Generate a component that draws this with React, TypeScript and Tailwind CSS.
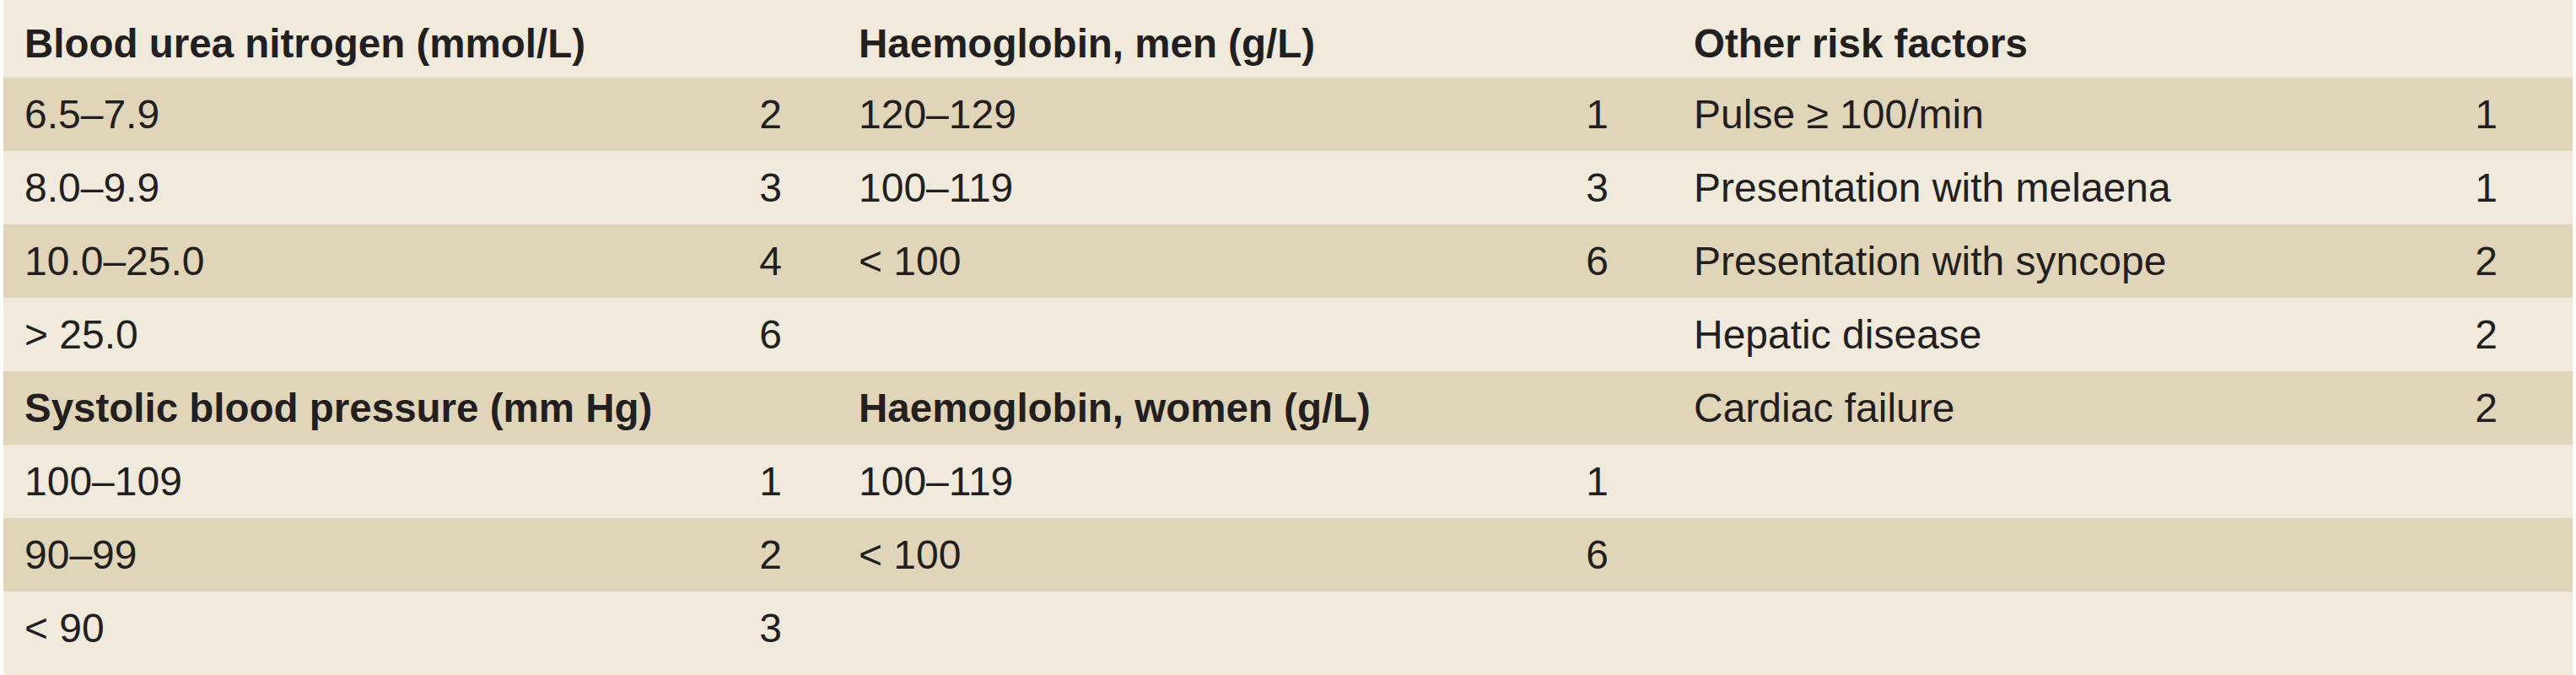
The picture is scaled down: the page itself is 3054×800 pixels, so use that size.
import React from "react";

type Cell = { label?: string; value?: string; bold?: boolean };
type Row = { dark: boolean; cells: [Cell, Cell, Cell] };

const rows: Row[] = [
  {
    dark: true,
    cells: [
      { label: "6.5–7.9", value: "2" },
      { label: "120–129", value: "1" },
      { label: "Pulse ≥ 100/min", value: "1" },
    ],
  },
  {
    dark: false,
    cells: [
      { label: "8.0–9.9", value: "3" },
      { label: "100–119", value: "3" },
      { label: "Presentation with melaena", value: "1" },
    ],
  },
  {
    dark: true,
    cells: [
      { label: "10.0–25.0", value: "4" },
      { label: "< 100", value: "6" },
      { label: "Presentation with syncope", value: "2" },
    ],
  },
  {
    dark: false,
    cells: [{ label: "> 25.0", value: "6" }, {}, { label: "Hepatic disease", value: "2" }],
  },
  {
    dark: true,
    cells: [
      { label: "Systolic blood pressure (mm Hg)", bold: true },
      { label: "Haemoglobin, women (g/L)", bold: true },
      { label: "Cardiac failure", value: "2" },
    ],
  },
  {
    dark: false,
    cells: [{ label: "100–109", value: "1" }, { label: "100–119", value: "1" }, {}],
  },
  {
    dark: true,
    cells: [{ label: "90–99", value: "2" }, { label: "< 100", value: "6" }, {}],
  },
  {
    dark: false,
    cells: [{ label: "< 90", value: "3" }, {}, {}],
  },
];

// three label/score column pairs
const cellBox = [
  "w-[1014px] pl-[25px] pr-[91px]",
  "w-[990px] pr-[101px]",
  "flex-1 pr-[89px]",
];

function TableCell({ cell, box }: { cell: Cell; box: string }) {
  return (
    <div className={`${box} flex items-center justify-between`}>
      <span className={cell.bold ? "font-bold text-[47.5px]" : "text-[48px]"}>{cell.label}</span>
      <span className="text-[48px]">{cell.value}</span>
    </div>
  );
}

export default function App() {
  return (
    <div className="w-[3054px] h-[800px] bg-white px-[4px]">
      <div className="h-full flex flex-col bg-[#f0eadc] text-[#231f20] leading-none font-['Liberation_Sans',Arial,sans-serif]">
        <div className="h-[92px] shrink-0 flex pt-[12px]">
          <TableCell cell={{ label: "Blood urea nitrogen (mmol/L)", bold: true }} box={cellBox[0]} />
          <TableCell cell={{ label: "Haemoglobin, men (g/L)", bold: true }} box={cellBox[1]} />
          <TableCell cell={{ label: "Other risk factors", bold: true }} box={cellBox[2]} />
        </div>
        {rows.map((row, i) => (
          <div key={i} className={`flex shrink-0 h-[87px] ${row.dark ? "bg-[#e0d5b9]" : ""}`}>
            {row.cells.map((cell, j) => (
              <TableCell key={j} cell={cell} box={cellBox[j]} />
            ))}
          </div>
        ))}
      </div>
    </div>
  );
}
